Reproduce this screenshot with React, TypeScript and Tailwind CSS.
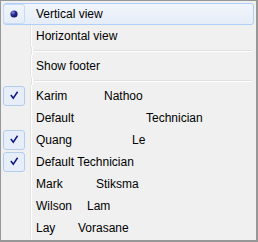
import React from "react";

type Item =
  | { kind: "sep" }
  | {
      kind: "item";
      first: string;
      last?: string;
      gap?: string;
      mark?: "radio" | "check";
      active?: boolean;
    };

const items: Item[] = [
  { kind: "item", first: "Vertical view", mark: "radio", active: true },
  { kind: "item", first: "Horizontal view" },
  { kind: "sep" },
  { kind: "item", first: "Show footer" },
  { kind: "sep" },
  { kind: "item", first: "Karim", last: "Nathoo", gap: "w-[68px]", mark: "check" },
  { kind: "item", first: "Default", last: "Technician", gap: "w-[110px]" },
  { kind: "item", first: "Quang", last: "Le", gap: "w-[96px]", mark: "check" },
  { kind: "item", first: "Default Technician", mark: "check" },
  { kind: "item", first: "Mark", last: "Stiksma", gap: "w-[60px]" },
  { kind: "item", first: "Wilson", last: "Lam", gap: "w-[51px]" },
  { kind: "item", first: "Lay", last: "Vorasane", gap: "w-[42px]" },
];

function Radio() {
  return (
    <svg width="8" height="8" viewBox="0 0 8 8">
      <defs>
        <radialGradient id="dot" cx="0.35" cy="0.3" r="0.75">
          <stop offset="0" stopColor="#8d8fe0" />
          <stop offset="0.45" stopColor="#2a2c9a" />
          <stop offset="1" stopColor="#14165e" />
        </radialGradient>
      </defs>
      <circle cx="4" cy="4" r="3.6" fill="url(#dot)" />
    </svg>
  );
}

function Check() {
  return (
    <svg width="22" height="20" viewBox="0 0 22 20">
      <path
        d="M8 9.5 L10.2 12.5 L14.5 6"
        fill="none"
        stroke="#0b1380"
        strokeWidth="1.6"
        strokeLinecap="square"
      />
    </svg>
  );
}

export default function App() {
  return (
    <div className="w-[258px] h-[242px] bg-[#f0f0f0] border-t border-l border-r-2 border-b-2 border-[#979797] p-[2px] pb-0 overflow-hidden font-['Liberation_Sans',Arial,sans-serif] text-[12px] text-black">
      {items.map((it, i) => {
        if (it.kind === "sep") {
          return (
            <div key={i} className="flex h-[8px]">
              <div className="w-[28px]" />
              <div className="w-[2px] border-l border-[#e2e3e3] bg-white" />
              <div className="flex-1 flex flex-col justify-center pl-[1px] pr-[2px]">
                <div className="h-[1px] bg-[#e0e0e0]" />
                <div className="h-[1px] bg-white" />
              </div>
            </div>
          );
        }
        return (
          <div
            key={i}
            className={
              it.active
                ? "flex h-[22px] items-center rounded-[3px] border border-[#aecff7] bg-gradient-to-b from-[#f1f5fb] to-[#e6edf8]"
                : "flex h-[22px] items-center border border-transparent"
            }
          >
            <div className="w-[26px] h-full flex items-center -ml-[1px]">
              {it.mark && (
                <div
                  className={
                    it.active
                      ? "w-[22px] h-[20px] flex items-center justify-center rounded-[3px] border border-[#c6dbf6]"
                      : "w-[22px] h-[20px] flex items-center justify-center rounded-[3px] border border-[#b3cdef] bg-[#e7eefa]"
                  }
                >
                  {it.mark === "radio" ? <Radio /> : <Check />}
                </div>
              )}
            </div>
            <div
              className={
                it.active
                  ? "w-[2px] h-[22px] ml-[1px]"
                  : "w-[2px] h-[22px] ml-[1px] border-l border-[#e2e3e3] bg-white"
              }
            />
            <div className="pl-[4px] whitespace-nowrap leading-[20px]">
              {it.last ? (
                <>
                  <span className={"inline-block " + it.gap}>{it.first}</span>
                  {it.last}
                </>
              ) : (
                it.first
              )}
            </div>
          </div>
        );
      })}
    </div>
  );
}
